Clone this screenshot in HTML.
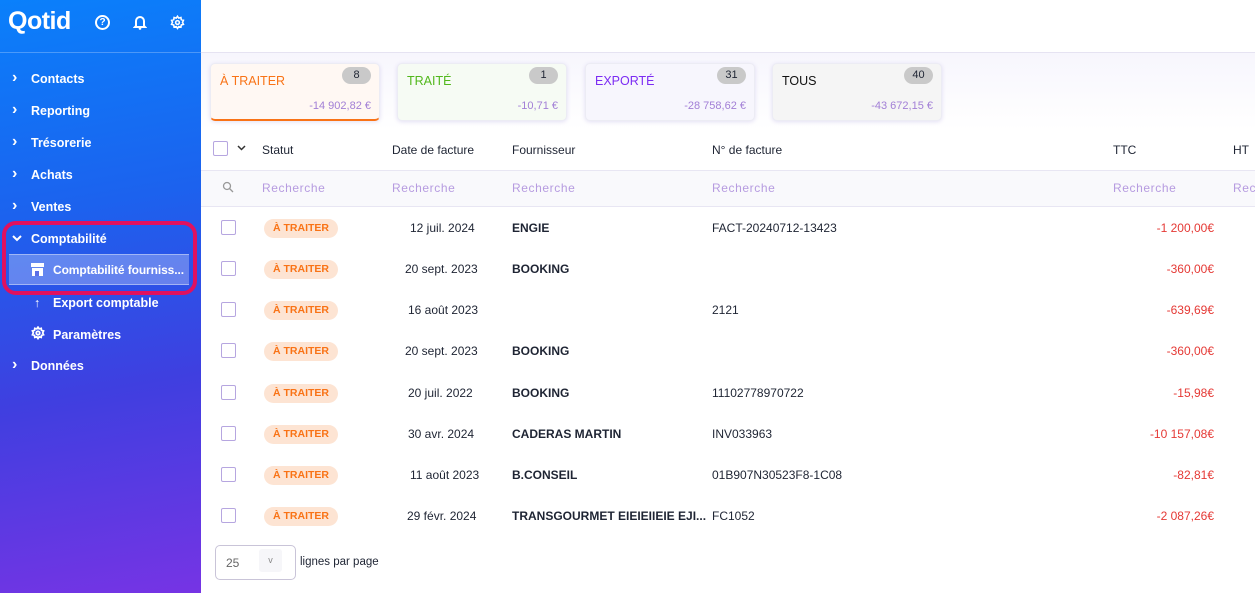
<!DOCTYPE html>
<html><head><meta charset="utf-8"><style>
*{box-sizing:border-box;margin:0;padding:0}
body{width:1255px;height:593px;overflow:hidden;font-family:"Liberation Sans",sans-serif;background:#fff;position:relative;color:#1e2433}
.sb{position:absolute;left:0;top:0;width:201px;height:593px;background:linear-gradient(170deg,#0a80fb 0%,#1c62ee 35%,#3f3fe0 65%,#7634e4 100%)}
.logo{position:absolute;left:8px;top:7px;color:#fff;font-weight:bold;font-size:25px;letter-spacing:-0.5px}
.sep{position:absolute;left:0;top:52px;width:201px;height:1px;background:rgba(255,255,255,.25)}
.it{position:absolute;left:31px;color:#fff;font-size:12.5px;font-weight:bold}
.ch{position:absolute;left:12px;color:#fff;font-size:16px;font-weight:bold;line-height:14px}
.hl{position:absolute;left:2px;top:221px;width:195px;height:74px;border:4px solid #e0115f;border-radius:14px}
.act{position:absolute;left:9px;top:254px;width:180px;height:31px;background:rgba(255,255,255,.28);border-top:1px solid rgba(255,255,255,.4);border-bottom:1px solid rgba(255,255,255,.4)}
.top{position:absolute;left:201px;top:0;right:0;height:53px;border-bottom:1px solid #e6e3f2}
.band{position:absolute;left:201px;top:53px;right:0;height:77px;background:linear-gradient(#f7f6fd,#fff)}
.card{position:absolute;top:63px;width:170px;height:58px;border-radius:5px;box-shadow:0 1px 4px rgba(120,100,200,.2);border:1px solid #ececf4}
.card .t{position:absolute;left:9px;top:10px;font-size:12.5px}
.card .n{position:absolute;right:8px;top:3px;width:29px;height:17px;border-radius:9px;background:#c9c9c9;font-size:11px;text-align:center;line-height:17px}
.card .a{position:absolute;right:8px;top:36px;font-size:11px;color:#a27fd6}
.hd{position:absolute;top:143px;font-size:12px}
.srow{position:absolute;left:201px;top:170px;right:0;height:37px;background:#f9f9fc;border-top:1px solid #e8e6f3;border-bottom:1px solid #e8e6f3}
.s{position:absolute;top:181px;font-size:12px;color:#b69be0;letter-spacing:.6px}
.cb{position:absolute;width:15px;height:15px;border:1.5px solid #b6a6e0;border-radius:2px;background:#fff}
.badge{position:absolute;left:264px;width:74px;height:19px;border-radius:10px;background:#fde4d3;color:#f97316;font-size:10.5px;font-weight:bold;text-align:center;line-height:19px}
.c{position:absolute;font-size:12px}
.b{font-weight:bold}
.red{color:#e53935;text-align:right}
</style></head><body>
<div class="sb">
<div class="logo">Qotid</div>
<div style="position:absolute;left:95px;top:15px;width:15px;height:15px;border:2px solid #fff;border-radius:50%;font-size:10px;font-weight:bold;color:#fff;text-align:center;line-height:11px">?</div>
<svg style="position:absolute;left:133px;top:15px" width="14" height="15" viewBox="0 0 14 15"><path d="M3 11V6a4 4 0 0 1 8 0v5l1 1H2z" fill="none" stroke="#fff" stroke-width="2"/><circle cx="7" cy="13.5" r="1.3" fill="#fff"/></svg>
<svg style="position:absolute;left:170px;top:15px" width="15" height="15" viewBox="0 0 24 24"><path d="M12 2l2 3 3.5-1 .5 3.5 3.5 1-1.5 3.5 1.5 3-3.5 1-.5 3.5-3.5-1-2 3-2-3-3.5 1-.5-3.5-3.5-1 1.5-3.5L2.5 8.5 6 7.5 6.5 4 10 5z" fill="none" stroke="#fff" stroke-width="2.5"/><circle cx="12" cy="12" r="3" fill="none" stroke="#fff" stroke-width="2.5"/></svg>
<div class="sep"></div>
<div class="ch" style="top:71px">›</div><div class="it" style="top:72px">Contacts</div>
<div class="ch" style="top:103px">›</div><div class="it" style="top:104px">Reporting</div>
<div class="ch" style="top:135px">›</div><div class="it" style="top:136px">Trésorerie</div>
<div class="ch" style="top:167px">›</div><div class="it" style="top:168px">Achats</div>
<div class="ch" style="top:199px">›</div><div class="it" style="top:200px">Ventes</div>
<svg style="position:absolute;left:12px;top:235px" width="10" height="7" viewBox="0 0 10 7"><path d="M1 1l4 4 4-4" fill="none" stroke="#fff" stroke-width="2"/></svg><div class="it" style="top:232px">Comptabilité</div>
<div class="act"></div>
<svg style="position:absolute;left:30px;top:263px" width="15" height="13" viewBox="0 0 15 13"><rect x="1" y="0" width="13" height="4" fill="#fff"/><rect x="2" y="5" width="11" height="8" fill="#fff"/><rect x="5" y="8" width="4" height="5" fill="#5b6fe6"/></svg>
<div class="it" style="left:53px;top:263px;font-size:12px;letter-spacing:-0.1px">Comptabilité fourniss...</div>
<div class="hl"></div>
<div class="it" style="left:34px;top:296px">↑</div><div class="it" style="left:53px;top:296px">Export comptable</div>
<svg style="position:absolute;left:31px;top:326px" width="14" height="14" viewBox="0 0 24 24"><path d="M12 2l2 3 3.5-1 .5 3.5 3.5 1-1.5 3.5 1.5 3-3.5 1-.5 3.5-3.5-1-2 3-2-3-3.5 1-.5-3.5-3.5-1 1.5-3.5L2.5 8.5 6 7.5 6.5 4 10 5z" fill="none" stroke="#fff" stroke-width="3"/><circle cx="12" cy="12" r="3" fill="none" stroke="#fff" stroke-width="3"/></svg>
<div class="it" style="left:53px;top:328px">Paramètres</div>
<div class="ch" style="top:358px">›</div><div class="it" style="top:359px">Données</div>
</div>
<div class="top"></div>
<div class="band"></div>
<div class="card" style="left:210px;background:#fff8f3;border-bottom:2px solid #f97316"><div class="t" style="color:#f97316">À TRAITER</div><div class="n">8</div><div class="a">-14 902,82 €</div></div>
<div class="card" style="left:397px;background:#f6fbf4"><div class="t" style="color:#52b81c">TRAITÉ</div><div class="n">1</div><div class="a">-10,71 €</div></div>
<div class="card" style="left:585px;background:#f7f6fd"><div class="t" style="color:#7c2cf3">EXPORTÉ</div><div class="n">31</div><div class="a">-28 758,62 €</div></div>
<div class="card" style="left:772px;background:#f5f5f5"><div class="t" style="color:#111">TOUS</div><div class="n">40</div><div class="a">-43 672,15 €</div></div>
<div class="cb" style="left:213px;top:141px"></div>
<svg style="position:absolute;left:237px;top:145px" width="9" height="6" viewBox="0 0 9 6"><path d="M1 1l3.5 3.5L8 1" fill="none" stroke="#333" stroke-width="1.5"/></svg>
<div class="hd" style="left:262px">Statut</div><div class="hd" style="left:392px">Date de facture</div><div class="hd" style="left:512px">Fournisseur</div><div class="hd" style="left:712px">N° de facture</div><div class="hd" style="left:1113px">TTC</div><div class="hd" style="left:1233px">HT</div>
<div class="srow"></div>
<svg style="position:absolute;left:222px;top:181px" width="12" height="12" viewBox="0 0 12 12"><circle cx="5" cy="5" r="3.5" fill="none" stroke="#999" stroke-width="1.3"/><path d="M7.5 7.5L11 11" stroke="#999" stroke-width="1.3"/></svg>
<div class="s" style="left:262px">Recherche</div><div class="s" style="left:392px">Recherche</div><div class="s" style="left:512px">Recherche</div><div class="s" style="left:712px">Recherche</div><div class="s" style="left:1113px">Recherche</div><div class="s" style="left:1233px">Recherche</div>

<div class="cb" style="left:221px;top:220px"></div><div class="badge" style="top:219px">À TRAITER</div><div class="c" style="left:410px;top:221px">12 juil. 2024</div><div class="c b" style="left:512px;top:221px">ENGIE</div><div class="c" style="left:712px;top:221px">FACT-20240712-13423</div><div class="c red" style="right:41px;top:221px">-1 200,00€</div>
<div class="cb" style="left:221px;top:261px"></div><div class="badge" style="top:260px">À TRAITER</div><div class="c" style="left:405px;top:262px">20 sept. 2023</div><div class="c b" style="left:512px;top:262px">BOOKING</div><div class="c red" style="right:41px;top:262px">-360,00€</div>
<div class="cb" style="left:221px;top:302px"></div><div class="badge" style="top:301px">À TRAITER</div><div class="c" style="left:408px;top:303px">16 août 2023</div><div class="c" style="left:712px;top:303px">2121</div><div class="c red" style="right:41px;top:303px">-639,69€</div>
<div class="cb" style="left:221px;top:343px"></div><div class="badge" style="top:342px">À TRAITER</div><div class="c" style="left:405px;top:344px">20 sept. 2023</div><div class="c b" style="left:512px;top:344px">BOOKING</div><div class="c red" style="right:41px;top:344px">-360,00€</div>
<div class="cb" style="left:221px;top:385px"></div><div class="badge" style="top:384px">À TRAITER</div><div class="c" style="left:408px;top:386px">20 juil. 2022</div><div class="c b" style="left:512px;top:386px">BOOKING</div><div class="c" style="left:712px;top:386px">11102778970722</div><div class="c red" style="right:41px;top:386px">-15,98€</div>
<div class="cb" style="left:221px;top:426px"></div><div class="badge" style="top:425px">À TRAITER</div><div class="c" style="left:408px;top:427px">30 avr. 2024</div><div class="c b" style="left:512px;top:427px">CADERAS MARTIN</div><div class="c" style="left:712px;top:427px">INV033963</div><div class="c red" style="right:41px;top:427px">-10 157,08€</div>
<div class="cb" style="left:221px;top:467px"></div><div class="badge" style="top:466px">À TRAITER</div><div class="c" style="left:410px;top:468px">11 août 2023</div><div class="c b" style="left:512px;top:468px">B.CONSEIL</div><div class="c" style="left:712px;top:468px">01B907N30523F8-1C08</div><div class="c red" style="right:41px;top:468px">-82,81€</div>
<div class="cb" style="left:221px;top:508px"></div><div class="badge" style="top:507px">À TRAITER</div><div class="c" style="left:407px;top:509px">29 févr. 2024</div><div class="c b" style="left:512px;top:509px">TRANSGOURMET EIEIEIIEIE EJI...</div><div class="c" style="left:712px;top:509px">FC1052</div><div class="c red" style="right:41px;top:509px">-2 087,26€</div>

<div style="position:absolute;left:215px;top:545px;width:81px;height:35px;border:1px solid #c9c4d8;border-radius:5px"></div>
<div class="c" style="left:226px;top:556px;color:#666">25</div>
<div style="position:absolute;left:259px;top:549px;width:23px;height:23px;background:#f6f6f9;border-radius:3px;color:#888;font-size:9px;text-align:center;line-height:23px">v</div>
<div class="c" style="left:300px;top:556px;font-size:11.5px">lignes par page</div>
</body></html>
